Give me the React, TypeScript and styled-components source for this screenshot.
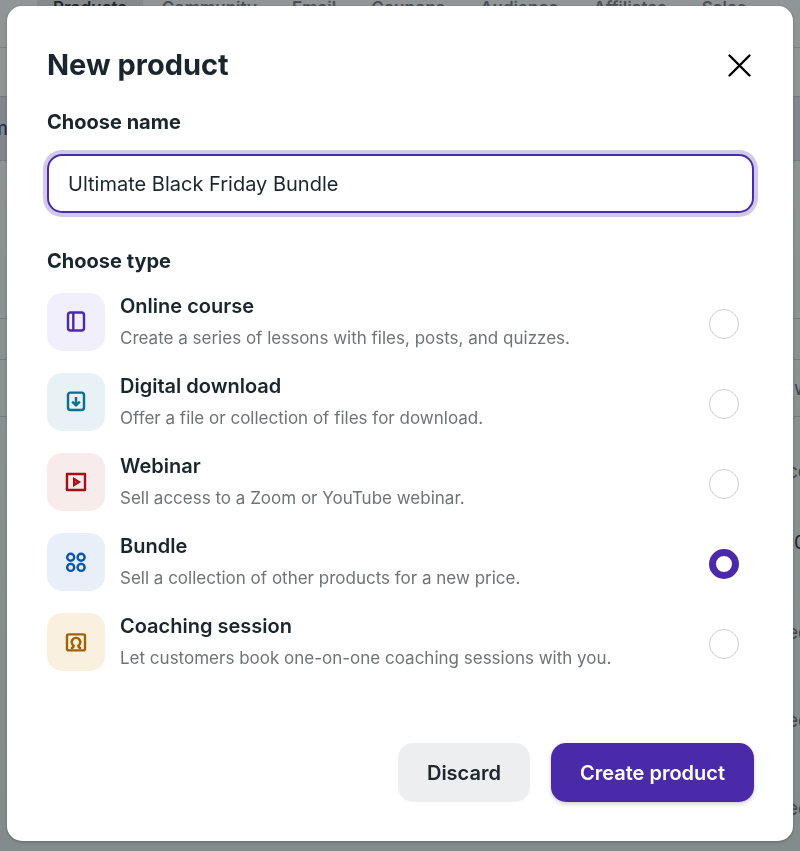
import React, { useState } from "react";
import styled, { createGlobalStyle } from "styled-components";

const GlobalStyle = createGlobalStyle`
  *, *::before, *::after { box-sizing: border-box; }
  html, body, #root { height: 100%; }
  body {
    margin: 0;
    background: #8d9495;
    color: #1a262e;
    font-family: Inter, "Liberation Sans", sans-serif;
    overflow: hidden;
  }
  button, input { font: inherit; }
`;

const Backdrop = styled.div`
  min-height: 100vh;
  background: linear-gradient(#909697, #899092 50%, #828a8c);
`;

const Nav = styled.nav`
  display: flex;
  height: 48px;
  padding-left: 37px;
  border-bottom: 1px solid #7c8386;
  overflow: hidden;
`;

const NavLink = styled.a<{ $active?: boolean }>`
  flex: none;
  height: 28px;
  margin-right: 3px;
  padding: 0 16px;
  font-size: 17px;
  line-height: 16px;
  font-weight: 600;
  color: ${(p) => (p.$active ? "#25292c" : "#4b5154")};
  background: ${(p) => (p.$active ? "#84898b" : "transparent")};
  text-decoration: none;
`;

const Band = styled.div<{ $height: number; $tinted?: boolean; $last?: boolean }>`
  display: flex;
  align-items: center;
  height: ${(p) => p.$height}px;
  border-bottom: ${(p) => (p.$last ? "none" : "1px solid #757c80")};
  background: ${(p) => (p.$tinted ? "#82868f" : "transparent")};
  color: ${(p) => (p.$tinted ? "#23254f" : "#40474a")};
  font-size: 19px;
`;

const Edge = styled.span<{ $width: number; $strong?: boolean }>`
  margin-left: auto;
  width: ${(p) => p.$width}px;
  overflow: hidden;
  color: ${(p) => (p.$strong ? "#1d2427" : "#40474a")};
`;

const Lead = styled.span`
  width: 8px;
  overflow: hidden;
  display: flex;
  justify-content: flex-end;
`;

const Overlay = styled.div`
  position: fixed;
  inset: 0;
  padding: 6px 7px 10px;
  overflow: auto;
`;

const Dialog = styled.form`
  padding: 41px 39px 39px 40px;
  border-radius: 15px;
  background: #fff;
  box-shadow: 0 1px 3px rgba(20, 30, 34, 0.3);
`;

const Header = styled.header`
  display: flex;
  align-items: center;
  justify-content: space-between;
`;

const Title = styled.h1`
  margin: 0;
  font-size: 29px;
  line-height: 36px;
  font-weight: 700;
`;

const CloseButton = styled.button`
  display: grid;
  place-items: center;
  width: 28px;
  height: 28px;
  padding: 0;
  border: 0;
  background: none;
  cursor: pointer;
`;

const FieldLabel = styled.label`
  display: block;
  margin: 27px 0 20px;
  font-size: 20px;
  line-height: 24px;
  font-weight: 700;
`;

const NameInput = styled.input`
  display: block;
  width: 100%;
  height: 59px;
  padding: 0 19px;
  border: 2px solid #4b2aa9;
  border-radius: 15px;
  outline: none;
  background: #fff;
  color: #1a262e;
  font-size: 20px;
  box-shadow: 0 0 0 4px #d1c9e9;
`;

const TypeGroup = styled.fieldset`
  margin: 36px 0 0;
  padding: 0;
  border: 0;
  min-width: 0;
`;

const Legend = styled.legend`
  padding: 0;
  margin-bottom: 20px;
  font-size: 20px;
  line-height: 24px;
  font-weight: 700;
`;

const Options = styled.div`
  display: grid;
  gap: 22px;
`;

const Option = styled.label`
  display: flex;
  align-items: center;
  height: 58px;
  padding-right: 15px;
  cursor: pointer;
`;

const Tile = styled.span<{ $bg: string; $fg: string }>`
  flex: none;
  display: grid;
  place-items: center;
  width: 58px;
  height: 58px;
  border-radius: 15px;
  background: ${(p) => p.$bg};
  color: ${(p) => p.$fg};
`;

const Copy = styled.span`
  flex: 1;
  min-width: 0;
  margin-left: 15px;
`;

const Name = styled.span`
  display: block;
  font-size: 20px;
  line-height: 26px;
  font-weight: 600;
`;

const Description = styled.span`
  display: block;
  margin-top: 6px;
  font-size: 17px;
  line-height: 26px;
  color: #6d7377;
`;

const Radio = styled.input`
  flex: none;
  appearance: none;
  width: 30px;
  height: 30px;
  margin: 4px 0 0;
  border: 1px solid #cfcfcf;
  border-radius: 50%;
  background: #fff;
  cursor: pointer;

  &:checked {
    border: 7px solid #4b2aa9;
  }
`;

const Footer = styled.footer`
  display: flex;
  justify-content: flex-end;
  gap: 21px;
  margin-top: 72px;
`;

const Button = styled.button<{ $primary?: boolean }>`
  height: 59px;
  padding: 0 29px;
  border: 0;
  border-radius: 15px;
  font-size: 20px;
  font-weight: 600;
  background: ${(p) => (p.$primary ? "#4b2aa9" : "#edeef0")};
  color: ${(p) => (p.$primary ? "#fff" : "#20262c")};
  box-shadow: ${(p) => (p.$primary ? "0 2px 4px rgba(30, 40, 50, 0.22)" : "none")};
  cursor: pointer;
`;

const Glyph = ({ children }: { children: React.ReactNode }) => (
  <svg width="24" height="24" viewBox="0 0 24 24" fill="none" stroke="currentColor" strokeWidth="2.4" aria-hidden="true">
    {children}
  </svg>
);

const types = [
  {
    id: "course",
    name: "Online course",
    description: "Create a series of lessons with files, posts, and quizzes.",
    bg: "#f1effb",
    fg: "#4b2aa9",
    icon: (
      <>
        <rect x="4" y="2.5" width="16" height="18" rx="2.4" />
        <path d="M9.3 2.5v18" />
      </>
    ),
  },
  {
    id: "download",
    name: "Digital download",
    description: "Offer a file or collection of files for download.",
    bg: "#e8f2f6",
    fg: "#04728f",
    icon: (
      <>
        <rect x="4" y="2.6" width="16" height="17.4" rx="2.4" />
        <path d="M12 7v8.4M8.2 11.6l3.8 3.8 3.8-3.8" strokeLinejoin="round" />
      </>
    ),
  },
  {
    id: "webinar",
    name: "Webinar",
    description: "Sell access to a Zoom or YouTube webinar.",
    bg: "#f7ebec",
    fg: "#a50e17",
    icon: (
      <>
        <rect x="3" y="4" width="18" height="16" strokeLinejoin="round" />
        <path d="M10.2 9.2v5.6l4.6-2.8z" />
      </>
    ),
  },
  {
    id: "bundle",
    name: "Bundle",
    description: "Sell a collection of other products for a new price.",
    bg: "#e8eff8",
    fg: "#0655b3",
    icon: (
      <>
        <circle cx="6.7" cy="7.2" r="3.5" />
        <circle cx="17.1" cy="7.2" r="3.5" />
        <circle cx="6.7" cy="17.4" r="3.5" />
        <circle cx="17.1" cy="17.4" r="3.5" />
      </>
    ),
  },
  {
    id: "coaching",
    name: "Coaching session",
    description: "Let customers book one-on-one coaching sessions with you.",
    bg: "#faf0e0",
    fg: "#a16207",
    icon: (
      <>
        <rect x="3" y="4.4" width="18" height="16" rx="1.6" />
        <path d="M6.8 18.4c1.6-.2 2.6-1 2.9-2.6a4.3 4.3 0 1 1 4.6 0c.3 1.6 1.3 2.4 2.9 2.6" />
      </>
    ),
  },
];

const links = ["Products", "Community", "Email", "Coupons", "Audience", "Affiliates", "Sales"];

export default function App() {
  const [name, setName] = useState("Ultimate Black Friday Bundle");
  const [type, setType] = useState("bundle");

  return (
    <>
      <GlobalStyle />
      <Backdrop aria-hidden="true">
        <Nav>
          {links.map((link, i) => (
            <NavLink key={link} href="#" tabIndex={-1} $active={i === 0}>
              {link}
            </NavLink>
          ))}
        </Nav>
        <Band $height={49} />
        <Band $height={64} $tinted>
          <Lead>m</Lead>
        </Band>
        <Band $height={158} />
        <Band $height={41} />
        <Band $height={57}>
          <Edge $width={6}>w</Edge>
        </Band>
        <Band $height={108} $last>
          <Edge $width={13}>ce</Edge>
        </Band>
        <Band $height={34} $last>
          <Edge $width={6} $strong>0</Edge>
        </Band>
        <Band $height={146} $last>
          <Edge $width={13}>ee</Edge>
        </Band>
        <Band $height={30} $last>
          <Edge $width={13}>ee</Edge>
        </Band>
        <Band $height={146} $last>
          <Edge $width={13}>ee</Edge>
        </Band>
      </Backdrop>
      <Overlay>
        <Dialog role="dialog" aria-modal="true" aria-labelledby="dialog-title" onSubmit={(e) => e.preventDefault()}>
          <Header>
            <Title id="dialog-title">New product</Title>
            <CloseButton type="button" aria-label="Close">
              <svg width="24" height="24" viewBox="0 0 24 24" fill="none" stroke="#000" strokeWidth="2.4" strokeLinecap="round">
                <path d="M1.5 2.5l20 20M21.5 2.5l-20 20" />
              </svg>
            </CloseButton>
          </Header>
          <FieldLabel htmlFor="product-name">Choose name</FieldLabel>
          <NameInput id="product-name" type="text" value={name} onChange={(e) => setName(e.target.value)} />
          <TypeGroup>
            <Legend>Choose type</Legend>
            <Options>
              {types.map((t) => (
                <Option key={t.id}>
                  <Tile $bg={t.bg} $fg={t.fg}>
                    <Glyph>{t.icon}</Glyph>
                  </Tile>
                  <Copy>
                    <Name>{t.name}</Name>
                    <Description>{t.description}</Description>
                  </Copy>
                  <Radio type="radio" name="type" value={t.id} checked={type === t.id} onChange={() => setType(t.id)} />
                </Option>
              ))}
            </Options>
          </TypeGroup>
          <Footer>
            <Button type="button">Discard</Button>
            <Button type="submit" $primary>
              Create product
            </Button>
          </Footer>
        </Dialog>
      </Overlay>
    </>
  );
}
